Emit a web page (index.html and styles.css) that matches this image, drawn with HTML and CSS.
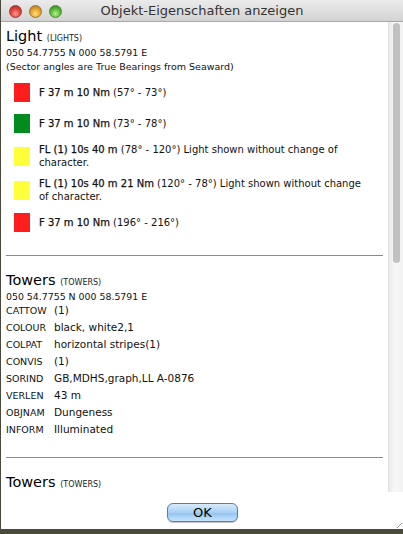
FILE: index.html
```html
<!DOCTYPE html>
<html>
<head>
<meta charset="utf-8">
<link rel="stylesheet" href="styles.css">
</head>
<body>
<div class="window">
  <div class="titlebar">
    <div class="lights">
      <span class="light red"></span>
      <span class="light yellow"></span>
      <span class="light green"></span>
    </div>
    <div class="title">Objekt-Eigenschaften anzeigen</div>
  </div>
  <div class="scrollview">
    <div class="content">
      <section class="feature">
        <h2 class="fname">Light <small>(LIGHTS)</small></h2>
        <div class="coord">050 54.7755 N 000 58.5791 E</div>
        <div class="note">(Sector angles are True Bearings from Seaward)</div>
        <ul class="sectors">
          <li class="sector"><span class="swatch sw-red"></span><span class="stext"><b>F 37 m 10 Nm</b> (57° - 73°)</span></li>
          <li class="sector"><span class="swatch sw-green"></span><span class="stext"><b>F 37 m 10 Nm</b> (73° - 78°)</span></li>
          <li class="sector"><span class="swatch sw-yellow"></span><span class="stext"><b>FL (1) 10s 40 m</b> (78° - 120°) Light shown without change of character.</span></li>
          <li class="sector"><span class="swatch sw-yellow"></span><span class="stext"><b>FL (1) 10s 40 m 21 Nm</b> (120° - 78°) Light shown without change of character.</span></li>
          <li class="sector"><span class="swatch sw-red"></span><span class="stext"><b>F 37 m 10 Nm</b> (196° - 216°)</span></li>
        </ul>
      </section>
      <hr class="sep">
      <section class="feature">
        <h2 class="fname">Towers <small>(TOWERS)</small></h2>
        <div class="coord">050 54.7755 N 000 58.5791 E</div>
        <dl class="attrs">
          <dt>CATTOW</dt><dd>(1)</dd>
          <dt>COLOUR</dt><dd>black, white2,1</dd>
          <dt>COLPAT</dt><dd>horizontal stripes(1)</dd>
          <dt>CONVIS</dt><dd>(1)</dd>
          <dt>SORIND</dt><dd>GB,MDHS,graph,LL A-0876</dd>
          <dt>VERLEN</dt><dd>43 m</dd>
          <dt>OBJNAM</dt><dd>Dungeness</dd>
          <dt>INFORM</dt><dd>Illuminated</dd>
        </dl>
      </section>
      <hr class="sep sep2">
      <section class="feature">
        <h2 class="fname">Towers <small>(TOWERS)</small></h2>
        <div class="coord">050 54.7755 N 000 58.5791 E</div>
      </section>
    </div>
    <div class="scrollbar"><div class="thumb"></div></div>
  </div>
  <div class="footer">
    <button class="ok">OK</button>
    <span class="grip"></span>
  </div>
</div>
</body>
</html>
```

FILE: styles.css
```css
html, body {
  margin: 0;
  padding: 0;
}
body {
  width: 403px;
  height: 534px;
  background: #4a4a3c;
  overflow: hidden;
  font-family: "DejaVu Sans", "Liberation Sans", sans-serif;
  color: #111;
}
.window {
  width: 402px;
  height: 529px;
  margin-left: 1px;
  background: #fff;
  display: flex;
  flex-direction: column;
}
.titlebar {
  height: 22px;
  flex: none;
  background: linear-gradient(#ebebeb, #d3d3d3);
  border-bottom: 1px solid #a8a8a8;
  box-sizing: border-box;
  display: flex;
  align-items: center;
  position: relative;
}
.lights {
  display: flex;
  gap: 7px;
  padding-left: 8px;
  padding-top: 1px;
}
.light {
  width: 13px;
  height: 13px;
  border-radius: 50%;
  box-sizing: border-box;
  display: block;
}
.light.red { background: radial-gradient(circle at 50% 70%, #ff9a94 0%, #e0453d 50%, #a8201a 100%); border: 1px solid #9a3a36; }
.light.yellow { background: radial-gradient(circle at 50% 70%, #ffe27a 0%, #e5a430 50%, #a8691a 100%); border: 1px solid #9c7330; }
.light.green { background: radial-gradient(circle at 50% 70%, #b9f28a 0%, #5bb83a 50%, #2b7a1c 100%); border: 1px solid #4d8a3a; }
.title {
  position: absolute;
  left: 0;
  right: 0;
  top: 3px;
  text-align: center;
  font-size: 13px;
  line-height: 16px;
  color: #333;
  pointer-events: none;
}
.scrollview {
  height: 470px;
  flex: none;
  display: flex;
  overflow: hidden;
}
.content {
  flex: 1;
  overflow: hidden;
  padding: 6px 0 0 5px;
}
.scrollbar {
  width: 15px;
  flex: none;
  background: linear-gradient(90deg, #ebebeb, #f7f7f7 40%, #f3f3f3);
  border-left: 1px solid #e2e2e2;
  box-sizing: border-box;
  padding: 1px 3px 0 4px;
}
.thumb {
  height: 240px;
  border-radius: 4px;
  background: #c1c1c1;
}
.feature { margin: 0; }
.fname {
  margin: 0;
  font-size: 14.5px;
  font-weight: normal;
  line-height: 16px;
  color: #000;
}
.fname small {
  font-size: 8px;
  color: #222;
}
.coord {
  font-size: 9.4px;
  line-height: 11px;
}
.note {
  font-size: 9.5px;
  line-height: 12px;
  margin-top: 3px;
}
.sectors {
  list-style: none;
  margin: 8px 0 0 0;
  padding: 0 0 0 8px;
}
.sector {
  display: flex;
  align-items: center;
  min-height: 23px;
  margin-bottom: 8px;
  font-size: 10px;
  line-height: 13px;
}
.swatch {
  width: 16px;
  height: 19px;
  flex: none;
  margin-right: 9px;
}
.sector .stext { width: 332px; }
.sector b { font-weight: normal; -webkit-text-stroke: 0.25px #111; }
.sw-red { background: #fd1d1d; }
.sw-green { background: #028c20; }
.sw-yellow { background: #ffff3a; }
.sep {
  border: 0;
  border-top: 1px solid #8a8a8a;
  margin: 21px 0 0 0;
  width: 377px;
}
.attrs {
  margin: 0;
  display: grid;
  grid-template-columns: 48px 1fr;
  font-size: 10.5px;
  line-height: 17px;
}
.attrs dt { font-size: 9.5px; }
.attrs dd { margin: 0; }
.sep2 { margin-top: 19px; }
.sep + .feature { margin-top: 16px; }
.footer {
  flex: 1;
  position: relative;
  display: flex;
  justify-content: center;
  align-items: flex-start;
  padding-top: 11px;
  box-sizing: border-box;
}
.ok {
  width: 71px;
  height: 19px;
  border-radius: 6px;
  border: 1px solid #5a7cb0;
  background: linear-gradient(#d8ebfb 0%, #a9d0f5 50%, #8ec1f0 51%, #c7e5fd 100%);
  font-family: "DejaVu Sans", sans-serif;
  font-size: 13px;
  line-height: 16px;
  padding: 0;
  color: #000;
  margin-left: 1px;
  box-shadow: 0 1px 1px rgba(0,0,0,0.25);
}
.grip {
  position: absolute;
  right: 1px;
  bottom: 1px;
  width: 10px;
  height: 10px;
  background: repeating-linear-gradient(135deg, transparent 0 2px, #999 2px 3px, transparent 3px 4px);
  clip-path: polygon(100% 0, 100% 100%, 0 100%);
}
```
